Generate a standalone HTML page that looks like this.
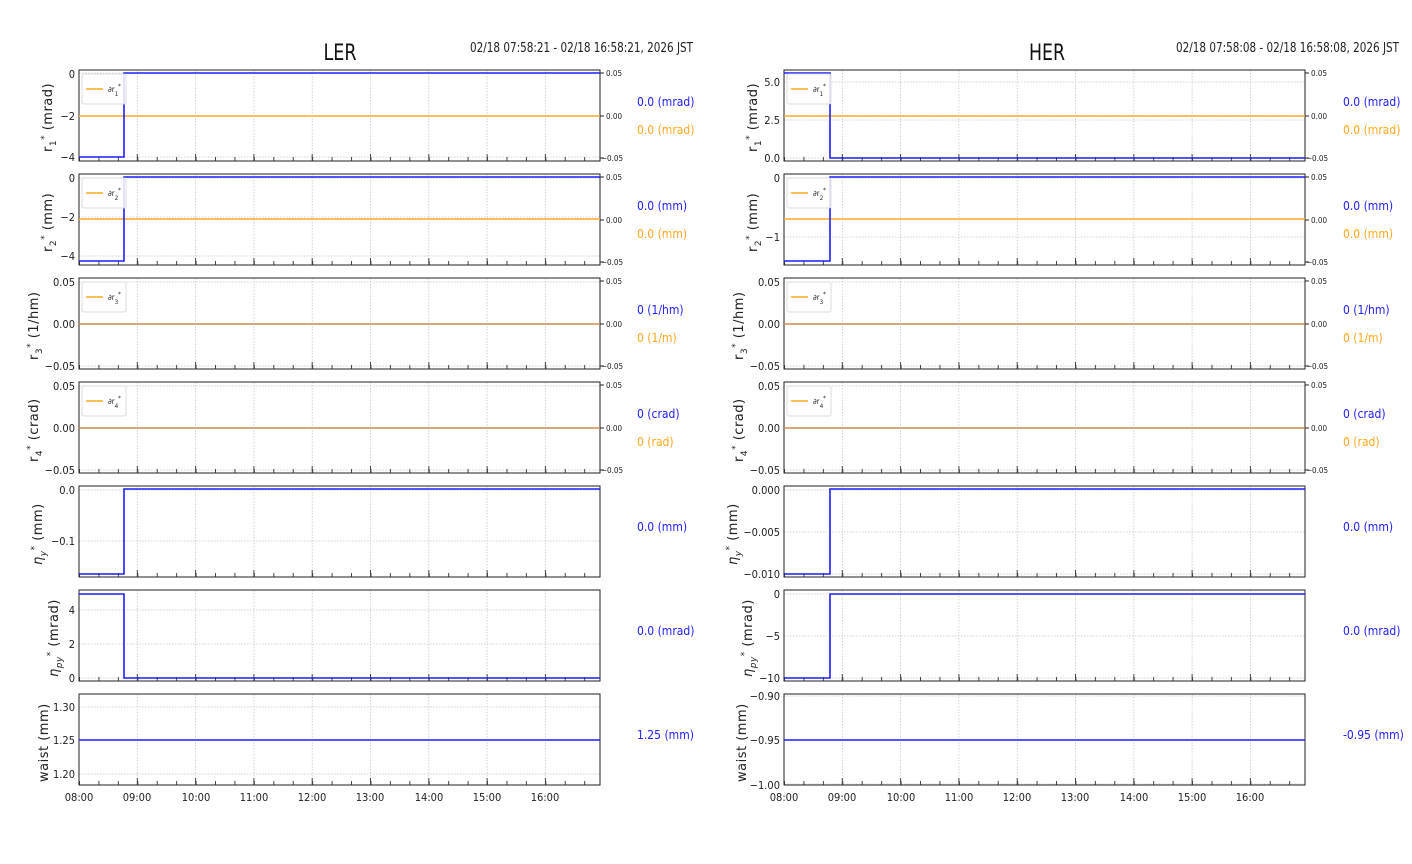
<!DOCTYPE html>
<html><head><meta charset="utf-8"><style>
html,body{margin:0;padding:0;background:#fff;}
svg{display:block;font-family:"Liberation Sans Narrow","DejaVu Sans Condensed","Liberation Sans",sans-serif;}
.t{font-size:11px;fill:#222;}
.s{font-size:8px;fill:#222;}
.yl{font-size:13px;fill:#222;font-family:"DejaVu Sans","Liberation Sans",sans-serif;letter-spacing:.5px}
.b{font-size:12px;fill:#1f1fff;}
.o{font-size:12px;fill:#ffa820;}
.hg{stroke:#c8c8c8;stroke-width:.8;stroke-dasharray:1.5 1.5;fill:none}
</style></head><body>
<svg width="1412" height="864" viewBox="0 0 1412 864" xmlns="http://www.w3.org/2000/svg">
<defs>
<g id="fr">
<path class="hg" d="M58.3 0V91M116.6 0V91M174.9 0V91M233.2 0V91M291.5 0V91M349.8 0V91M408.1 0V91M466.4 0V91"/>
<line x1="0" y1="89" x2="521" y2="89" stroke="#444" stroke-width="4" stroke-dasharray="1 18.43"/>
<path d="M58.3 91v-7M116.6 91v-7M174.9 91v-7M233.2 91v-7M291.5 91v-7M349.8 91v-7M408.1 91v-7M466.4 91v-7" stroke="#444" stroke-width="1"/>
<rect x="0" y="0" width="521" height="91" fill="none" stroke="#222" stroke-width="1"/>
</g>
<g id="rt">
<path d="M521 3h4M521 46h4M521 88h4" stroke="#222"/>
<text class="s" x="527" y="6">0.05</text>
<text class="s" x="527" y="49">0.00</text>
<text class="s" x="522" y="91">−0.05</text>
</g>
</defs>

<text x="340" y="60" text-anchor="middle" style="font-size:22px" fill="#111" textLength="33" lengthAdjust="spacingAndGlyphs">LER</text>
<text x="470" y="52" class="t" style="font-size:13px" textLength="223" lengthAdjust="spacingAndGlyphs">02/18 07:58:21 - 02/18 16:58:21, 2026 JST</text>
<text x="1047" y="60" text-anchor="middle" style="font-size:22px" fill="#111" textLength="36" lengthAdjust="spacingAndGlyphs">HER</text>
<text x="1176" y="52" class="t" style="font-size:13px" textLength="223" lengthAdjust="spacingAndGlyphs">02/18 07:58:08 - 02/18 16:58:08, 2026 JST</text>

<!-- LEFT -->
<g transform="translate(79,70)">
<path class="hg" d="M0 3H521M0 46H521M0 87H521"/>
<use href="#fr"/><use href="#rt"/>
<line x1="0" y1="46" x2="521" y2="46" stroke="#ffa820" stroke-width="1.5"/>
<path d="M0 87H45V3H521" stroke="#1f1fff" stroke-width="1.6" fill="none"/>
<rect x="3" y="4" width="44" height="30" rx="2" fill="#fff" fill-opacity=".85" stroke="#ddd"/>
<line x1="7" y1="19" x2="24" y2="19" stroke="#ffa820" stroke-width="1.5"/>
<text class="s" x="29" y="22">∂r<tspan font-size="6" dy="4">1</tspan><tspan font-size="6" dy="-8">*</tspan></text>
</g>
<text class="t" x="75" y="78" text-anchor="end">0</text>
<text class="t" x="75" y="120" text-anchor="end">−2</text>
<text class="t" x="75" y="161" text-anchor="end">−4</text>
<text class="yl" transform="translate(52,152) rotate(-90)">r<tspan font-size="9" dy="4">1</tspan><tspan font-size="9" dy="-9">*</tspan><tspan dy="5"> (mrad)</tspan></text>
<text class="b" x="637" y="106">0.0 (mrad)</text>
<text class="o" x="637" y="134">0.0 (mrad)</text>

<g transform="translate(79,174)">
<path class="hg" d="M0 4H521M0 43H521M0 82H521"/>
<use href="#fr"/><use href="#rt"/>
<line x1="0" y1="45" x2="521" y2="45" stroke="#ffa820" stroke-width="1.5"/>
<path d="M0 87H45V3H521" stroke="#1f1fff" stroke-width="1.6" fill="none"/>
<rect x="3" y="4" width="44" height="30" rx="2" fill="#fff" fill-opacity=".85" stroke="#ddd"/>
<line x1="7" y1="19" x2="24" y2="19" stroke="#ffa820" stroke-width="1.5"/>
<text class="s" x="29" y="22">∂r<tspan font-size="6" dy="4">2</tspan><tspan font-size="6" dy="-8">*</tspan></text>
</g>
<text class="t" x="75" y="182" text-anchor="end">0</text>
<text class="t" x="75" y="221" text-anchor="end">−2</text>
<text class="t" x="75" y="260" text-anchor="end">−4</text>
<text class="yl" transform="translate(52,252) rotate(-90)">r<tspan font-size="9" dy="4">2</tspan><tspan font-size="9" dy="-9">*</tspan><tspan dy="5"> (mm)</tspan></text>
<text class="b" x="637" y="210">0.0 (mm)</text>
<text class="o" x="637" y="238">0.0 (mm)</text>

<g transform="translate(79,278)">
<path class="hg" d="M0 4H521M0 46H521M0 88H521"/>
<use href="#fr"/><use href="#rt"/>
<line x1="0" y1="46" x2="521" y2="46" stroke="#ffa820" stroke-width="1.5"/>
<line x1="0" y1="46" x2="521" y2="46" stroke="#1f1fff" stroke-width="1" stroke-opacity=".35"/>
<rect x="3" y="4" width="44" height="30" rx="2" fill="#fff" fill-opacity=".85" stroke="#ddd"/>
<line x1="7" y1="19" x2="24" y2="19" stroke="#ffa820" stroke-width="1.5"/>
<text class="s" x="29" y="22">∂r<tspan font-size="6" dy="4">3</tspan><tspan font-size="6" dy="-8">*</tspan></text>
</g>
<text class="t" x="75" y="286" text-anchor="end">0.05</text>
<text class="t" x="75" y="328" text-anchor="end">0.00</text>
<text class="t" x="75" y="370" text-anchor="end">−0.05</text>
<text class="yl" transform="translate(38,360) rotate(-90)">r<tspan font-size="9" dy="4">3</tspan><tspan font-size="9" dy="-9">*</tspan><tspan dy="5"> (1/hm)</tspan></text>
<text class="b" x="637" y="314">0 (1/hm)</text>
<text class="o" x="637" y="342">0 (1/m)</text>

<g transform="translate(79,382)">
<path class="hg" d="M0 4H521M0 46H521M0 88H521"/>
<use href="#fr"/><use href="#rt"/>
<line x1="0" y1="46" x2="521" y2="46" stroke="#ffa820" stroke-width="1.5"/>
<line x1="0" y1="46" x2="521" y2="46" stroke="#1f1fff" stroke-width="1" stroke-opacity=".35"/>
<rect x="3" y="4" width="44" height="30" rx="2" fill="#fff" fill-opacity=".85" stroke="#ddd"/>
<line x1="7" y1="19" x2="24" y2="19" stroke="#ffa820" stroke-width="1.5"/>
<text class="s" x="29" y="22">∂r<tspan font-size="6" dy="4">4</tspan><tspan font-size="6" dy="-8">*</tspan></text>
</g>
<text class="t" x="75" y="390" text-anchor="end">0.05</text>
<text class="t" x="75" y="432" text-anchor="end">0.00</text>
<text class="t" x="75" y="474" text-anchor="end">−0.05</text>
<text class="yl" transform="translate(38,462) rotate(-90)">r<tspan font-size="9" dy="4">4</tspan><tspan font-size="9" dy="-9">*</tspan><tspan dy="5"> (crad)</tspan></text>
<text class="b" x="637" y="418">0 (crad)</text>
<text class="o" x="637" y="446">0 (rad)</text>

<g transform="translate(79,486)">
<path class="hg" d="M0 4H521M0 55H521"/>
<use href="#fr"/>
<path d="M0 88H45V3H521" stroke="#1f1fff" stroke-width="1.6" fill="none"/>
</g>
<text class="t" x="75" y="494" text-anchor="end">0.0</text>
<text class="t" x="75" y="545" text-anchor="end">−0.1</text>
<text class="yl" transform="translate(42,565) rotate(-90)"><tspan font-style="italic">η</tspan><tspan font-size="9" dy="4" font-style="italic">y</tspan><tspan font-size="9" dy="-9">*</tspan><tspan dy="5"> (mm)</tspan></text>
<text class="b" x="637" y="531">0.0 (mm)</text>

<g transform="translate(79,590)">
<path class="hg" d="M0 20H521M0 54H521M0 88H521"/>
<use href="#fr"/>
<path d="M0 4H45V88H521" stroke="#1f1fff" stroke-width="1.6" fill="none"/>
</g>
<text class="t" x="75" y="614" text-anchor="end">4</text>
<text class="t" x="75" y="648" text-anchor="end">2</text>
<text class="t" x="75" y="682" text-anchor="end">0</text>
<text class="yl" transform="translate(58,677) rotate(-90)"><tspan font-style="italic">η</tspan><tspan font-size="9" dy="4" font-style="italic">py</tspan><tspan font-size="9" dy="-9">*</tspan><tspan dy="5"> (mrad)</tspan></text>
<text class="b" x="637" y="635">0.0 (mrad)</text>

<g transform="translate(79,694)">
<path class="hg" d="M0 13H521M0 46H521M0 80H521"/>
<use href="#fr"/>
<line x1="0" y1="46" x2="521" y2="46" stroke="#1f1fff" stroke-width="1.6"/>
</g>
<text class="t" x="75" y="711" text-anchor="end">1.30</text>
<text class="t" x="75" y="744" text-anchor="end">1.25</text>
<text class="t" x="75" y="778" text-anchor="end">1.20</text>
<text class="yl" transform="translate(48,782) rotate(-90)">waist (mm)</text>
<text class="b" x="637" y="739">1.25 (mm)</text>

<g class="t" text-anchor="middle">
<text x="79" y="801">08:00</text><text x="137" y="801">09:00</text><text x="196" y="801">10:00</text><text x="254" y="801">11:00</text><text x="312" y="801">12:00</text><text x="370" y="801">13:00</text><text x="429" y="801">14:00</text><text x="487" y="801">15:00</text><text x="545" y="801">16:00</text>
</g>

<!-- RIGHT -->
<g transform="translate(784,70)">
<path class="hg" d="M0 12H521M0 50H521M0 88H521"/>
<use href="#fr"/><use href="#rt"/>
<line x1="0" y1="46" x2="521" y2="46" stroke="#ffa820" stroke-width="1.5"/>
<path d="M0 3H46V88H521" stroke="#1f1fff" stroke-width="1.6" fill="none"/>
<rect x="3" y="4" width="44" height="30" rx="2" fill="#fff" fill-opacity=".85" stroke="#ddd"/>
<line x1="7" y1="19" x2="24" y2="19" stroke="#ffa820" stroke-width="1.5"/>
<text class="s" x="29" y="22">∂r<tspan font-size="6" dy="4">1</tspan><tspan font-size="6" dy="-8">*</tspan></text>
</g>
<text class="t" x="780" y="86" text-anchor="end">5.0</text>
<text class="t" x="780" y="124" text-anchor="end">2.5</text>
<text class="t" x="780" y="162" text-anchor="end">0.0</text>
<text class="yl" transform="translate(757,152) rotate(-90)">r<tspan font-size="9" dy="4">1</tspan><tspan font-size="9" dy="-9">*</tspan><tspan dy="5"> (mrad)</tspan></text>
<text class="b" x="1343" y="106">0.0 (mrad)</text>
<text class="o" x="1343" y="134">0.0 (mrad)</text>

<g transform="translate(784,174)">
<path class="hg" d="M0 4H521M0 63H521"/>
<use href="#fr"/><use href="#rt"/>
<line x1="0" y1="45" x2="521" y2="45" stroke="#ffa820" stroke-width="1.5"/>
<path d="M0 87H46V3H521" stroke="#1f1fff" stroke-width="1.6" fill="none"/>
<rect x="3" y="4" width="44" height="30" rx="2" fill="#fff" fill-opacity=".85" stroke="#ddd"/>
<line x1="7" y1="19" x2="24" y2="19" stroke="#ffa820" stroke-width="1.5"/>
<text class="s" x="29" y="22">∂r<tspan font-size="6" dy="4">2</tspan><tspan font-size="6" dy="-8">*</tspan></text>
</g>
<text class="t" x="780" y="182" text-anchor="end">0</text>
<text class="t" x="780" y="241" text-anchor="end">−1</text>
<text class="yl" transform="translate(757,252) rotate(-90)">r<tspan font-size="9" dy="4">2</tspan><tspan font-size="9" dy="-9">*</tspan><tspan dy="5"> (mm)</tspan></text>
<text class="b" x="1343" y="210">0.0 (mm)</text>
<text class="o" x="1343" y="238">0.0 (mm)</text>

<g transform="translate(784,278)">
<path class="hg" d="M0 4H521M0 46H521M0 88H521"/>
<use href="#fr"/><use href="#rt"/>
<line x1="0" y1="46" x2="521" y2="46" stroke="#ffa820" stroke-width="1.5"/>
<line x1="0" y1="46" x2="521" y2="46" stroke="#1f1fff" stroke-width="1" stroke-opacity=".35"/>
<rect x="3" y="4" width="44" height="30" rx="2" fill="#fff" fill-opacity=".85" stroke="#ddd"/>
<line x1="7" y1="19" x2="24" y2="19" stroke="#ffa820" stroke-width="1.5"/>
<text class="s" x="29" y="22">∂r<tspan font-size="6" dy="4">3</tspan><tspan font-size="6" dy="-8">*</tspan></text>
</g>
<text class="t" x="780" y="286" text-anchor="end">0.05</text>
<text class="t" x="780" y="328" text-anchor="end">0.00</text>
<text class="t" x="780" y="370" text-anchor="end">−0.05</text>
<text class="yl" transform="translate(743,360) rotate(-90)">r<tspan font-size="9" dy="4">3</tspan><tspan font-size="9" dy="-9">*</tspan><tspan dy="5"> (1/hm)</tspan></text>
<text class="b" x="1343" y="314">0 (1/hm)</text>
<text class="o" x="1343" y="342">0 (1/m)</text>

<g transform="translate(784,382)">
<path class="hg" d="M0 4H521M0 46H521M0 88H521"/>
<use href="#fr"/><use href="#rt"/>
<line x1="0" y1="46" x2="521" y2="46" stroke="#ffa820" stroke-width="1.5"/>
<line x1="0" y1="46" x2="521" y2="46" stroke="#1f1fff" stroke-width="1" stroke-opacity=".35"/>
<rect x="3" y="4" width="44" height="30" rx="2" fill="#fff" fill-opacity=".85" stroke="#ddd"/>
<line x1="7" y1="19" x2="24" y2="19" stroke="#ffa820" stroke-width="1.5"/>
<text class="s" x="29" y="22">∂r<tspan font-size="6" dy="4">4</tspan><tspan font-size="6" dy="-8">*</tspan></text>
</g>
<text class="t" x="780" y="390" text-anchor="end">0.05</text>
<text class="t" x="780" y="432" text-anchor="end">0.00</text>
<text class="t" x="780" y="474" text-anchor="end">−0.05</text>
<text class="yl" transform="translate(743,462) rotate(-90)">r<tspan font-size="9" dy="4">4</tspan><tspan font-size="9" dy="-9">*</tspan><tspan dy="5"> (crad)</tspan></text>
<text class="b" x="1343" y="418">0 (crad)</text>
<text class="o" x="1343" y="446">0 (rad)</text>

<g transform="translate(784,486)">
<path class="hg" d="M0 4H521M0 46H521M0 88H521"/>
<use href="#fr"/>
<path d="M0 88H46V3H521" stroke="#1f1fff" stroke-width="1.6" fill="none"/>
</g>
<text class="t" x="780" y="494" text-anchor="end">0.000</text>
<text class="t" x="780" y="536" text-anchor="end">−0.005</text>
<text class="t" x="780" y="578" text-anchor="end">−0.010</text>
<text class="yl" transform="translate(737,565) rotate(-90)"><tspan font-style="italic">η</tspan><tspan font-size="9" dy="4" font-style="italic">y</tspan><tspan font-size="9" dy="-9">*</tspan><tspan dy="5"> (mm)</tspan></text>
<text class="b" x="1343" y="531">0.0 (mm)</text>

<g transform="translate(784,590)">
<path class="hg" d="M0 4H521M0 46H521M0 88H521"/>
<use href="#fr"/>
<path d="M0 88H46V4H521" stroke="#1f1fff" stroke-width="1.6" fill="none"/>
</g>
<text class="t" x="780" y="598" text-anchor="end">0</text>
<text class="t" x="780" y="640" text-anchor="end">−5</text>
<text class="t" x="780" y="682" text-anchor="end">−10</text>
<text class="yl" transform="translate(752,677) rotate(-90)"><tspan font-style="italic">η</tspan><tspan font-size="9" dy="4" font-style="italic">py</tspan><tspan font-size="9" dy="-9">*</tspan><tspan dy="5"> (mrad)</tspan></text>
<text class="b" x="1343" y="635">0.0 (mrad)</text>

<g transform="translate(784,694)">
<path class="hg" d="M0 2H521M0 46H521M0 90H521"/>
<use href="#fr"/>
<line x1="0" y1="46" x2="521" y2="46" stroke="#1f1fff" stroke-width="1.6"/>
</g>
<text class="t" x="780" y="700" text-anchor="end">−0.90</text>
<text class="t" x="780" y="744" text-anchor="end">−0.95</text>
<text class="t" x="780" y="789" text-anchor="end">−1.00</text>
<text class="yl" transform="translate(746,782) rotate(-90)">waist (mm)</text>
<text class="b" x="1343" y="739">-0.95 (mm)</text>

<g class="t" text-anchor="middle">
<text x="784" y="801">08:00</text><text x="842" y="801">09:00</text><text x="901" y="801">10:00</text><text x="959" y="801">11:00</text><text x="1017" y="801">12:00</text><text x="1075" y="801">13:00</text><text x="1134" y="801">14:00</text><text x="1192" y="801">15:00</text><text x="1250" y="801">16:00</text>
</g>
</svg>
</body></html>
